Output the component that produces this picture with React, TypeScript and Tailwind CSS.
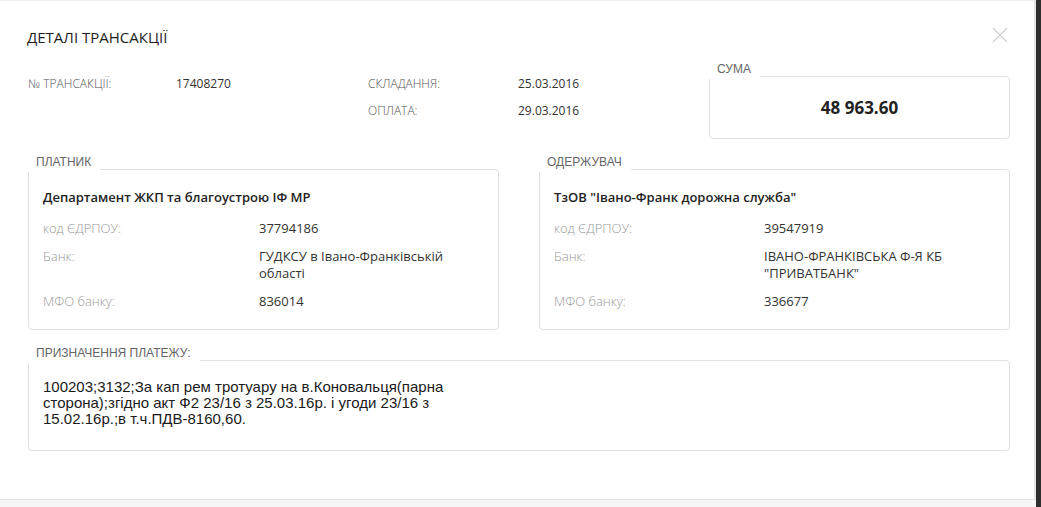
import React from 'react';

const legendCls =
  "absolute left-[-1px] top-[-15px] bg-white pl-[8px] pr-[9px] pb-[3px] text-[12px] leading-[14px] text-[#666] font-['Liberation_Sans',Arial,sans-serif]";

function Legend({ children }: { children: React.ReactNode }) {
  return <span className={legendCls}>{children}</span>;
}

function Party({
  title,
  name,
  code,
  bank,
  mfo,
  labelWidth,
}: {
  title: string;
  name: string;
  code: string;
  bank: string;
  mfo: string;
  labelWidth: 'left' | 'right';
}) {
  return (
    <div className="relative w-[471px] rounded-[4px] border border-[#dde1e6] px-[14px] pt-[18px] pb-[19px]">
      <Legend>{title}</Legend>
      <div className="text-[13px] leading-[18px] font-semibold text-[#222]">{name}</div>
      <div
        className={
          labelWidth === 'left'
            ? 'mt-[14px] grid grid-cols-[216px_1fr] gap-y-[11px] text-[13px] leading-[17px]'
            : 'mt-[14px] grid grid-cols-[210px_1fr] gap-y-[11px] text-[13px] leading-[17px]'
        }
      >
        <span className="font-light text-[#999]">код ЄДРПОУ:</span>
        <span className="text-[#333]">{code}</span>
        <span className="font-light text-[#999]">Банк:</span>
        <span className="text-[#333]">{bank}</span>
        <span className="font-light text-[#999]">МФО банку:</span>
        <span className="text-[#333]">{mfo}</span>
      </div>
    </div>
  );
}

export default function App() {
  return (
    <div className="flex h-[507px] w-[1041px] bg-[#2e2e2e] font-['Open_Sans',sans-serif]">
      <div className="flex w-[1036px] flex-col bg-[#f6f6f6]">
        <div className="h-[500px] border-t border-r-2 border-b border-t-[#eeeeee] border-r-[#e4e4e4] border-b-[#e6e6e6] bg-white">
          <div className="flex items-start justify-between pl-[27px] pr-[26px] pt-[26px]">
            <h1 className="text-[15px] leading-[20px] font-medium text-[#1e1e1e]">ДЕТАЛІ ТРАНСАКЦІЇ</h1>
            <svg width="16" height="16" viewBox="0 0 16 16">
              <path d="M1 1L15 15M15 1L1 15" stroke="#cfcfcf" strokeWidth="1.3" fill="none" />
            </svg>
          </div>

          <div className="ml-[28px] w-[982px]">
            <div className="mt-[16px] flex items-start">
              <div className="grid w-[681px] grid-cols-[148px_192px_150px_1fr] gap-y-[9px] pt-[12px] text-[12px] leading-[18px]">
                <span className="font-light text-[#555]">№ ТРАНСАКЦІЇ:</span>
                <span className="text-[#333]">17408270</span>
                <span className="font-light text-[#555]">СКЛАДАННЯ:</span>
                <span className="text-[#333]">25.03.2016</span>
                <span></span>
                <span></span>
                <span className="font-light text-[#555]">ОПЛАТА:</span>
                <span className="text-[#333]">29.03.2016</span>
              </div>
              <div className="relative mt-[13px] flex h-[63px] w-[301px] items-center justify-center rounded-[4px] border border-[#dde1e6]">
                <Legend>СУМА</Legend>
                <span className="text-[17px] font-bold text-[#222]">48 963.60</span>
              </div>
            </div>

            <div className="mt-[30px] flex gap-[40px]">
              <Party
                title="ПЛАТНИК"
                name="Департамент ЖКП та благоустрою ІФ МР"
                code="37794186"
                bank="ГУДКСУ в Івано-Франківській області"
                mfo="836014"
                labelWidth="left"
              />
              <Party
                title="ОДЕРЖУВАЧ"
                name={'ТзОВ "Івано-Франк дорожна служба"'}
                code="39547919"
                bank={'ІВАНО-ФРАНКІВСЬКА Ф-Я КБ "ПРИВАТБАНК"'}
                mfo="336677"
                labelWidth="right"
              />
            </div>

            <div className="relative mt-[30px] h-[91px] rounded-[4px] border border-[#dde1e6] px-[14px] pt-[18px]">
              <Legend>ПРИЗНАЧЕННЯ ПЛАТЕЖУ:</Legend>
              <p className="text-[15px] leading-[16px] text-[#1a1a1a] font-['Liberation_Sans',Arial,sans-serif]">
                100203;3132;За кап рем тротуару на в.Коновальця(парна
                <br />
                сторона);згідно акт Ф2 23/16 з 25.03.16р. і угоди 23/16 з
                <br />
                15.02.16р.;в т.ч.ПДВ-8160,60.
              </p>
            </div>
          </div>
        </div>
      </div>
    </div>
  );
}
